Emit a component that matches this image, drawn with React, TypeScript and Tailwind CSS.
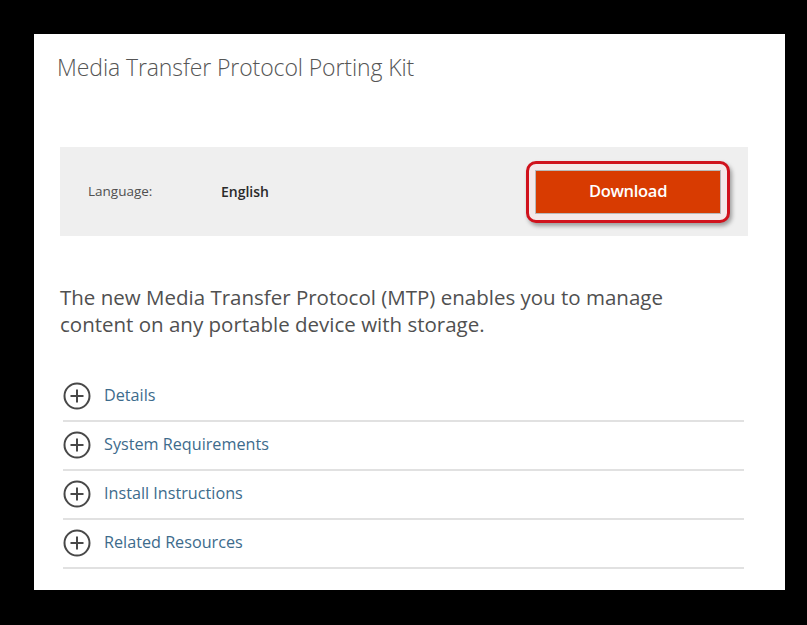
import React from "react";

const sections = ["Details", "System Requirements", "Install Instructions", "Related Resources"];

function PlusCircle() {
  return (
    <svg width="28" height="28" viewBox="0 0 28 28" className="shrink-0">
      <circle cx="14" cy="14" r="12.5" fill="none" stroke="#484848" strokeWidth="2" />
      <path d="M14 7.5v13M7.5 14h13" stroke="#484848" strokeWidth="2" />
    </svg>
  );
}

export default function App() {
  return (
    <div className="h-[625px] w-[807px] overflow-hidden bg-black pl-[34px] pt-[34px]" style={{ fontFamily: '"Open Sans", "Noto Sans", sans-serif' }}>
      <div className="flex h-[556px] w-[751px] flex-col bg-white">
        <h1 className="pl-[23px] pt-[18px] text-[23px] font-light leading-[30px] tracking-[-0.1px] text-[#555]">
          Media Transfer Protocol Porting Kit
        </h1>

        <div className="ml-[26px] mt-[65px] flex h-[89px] w-[688px] items-center bg-[#efefef]">
          <span className="ml-[28px] w-[133px] text-[13.5px] text-[#505050]">Language:</span>
          <span className="text-[14px] font-semibold text-[#2a2a2a]">English</span>
          <div className="ml-auto mr-[18px] rounded-[10px] border-[3px] border-[#d0121c] bg-[#f4e9e9] p-[6px] shadow-[2px_3px_4px_rgba(0,0,0,0.35)]">
            <button className="flex h-[44px] w-[186px] items-center justify-center border border-[#b9b9b9] bg-[#d83b01] text-[16.5px] font-semibold tracking-[-0.3px] text-white">
              Download
            </button>
          </div>
        </div>

        <p className="ml-[26px] mt-[48px] w-[645px] text-[20.5px] leading-[27px] text-[#505050]">
          The new Media Transfer Protocol (MTP) enables you to manage content on any portable device with storage.
        </p>

        <div className="ml-[29px] mt-[35px] w-[681px]">
          {sections.map((s) => (
            <div key={s} className="flex h-[49px] items-center gap-[13px] border-b-2 border-[#e1e1e1] pb-[2px]">
              <PlusCircle />
              <span className="text-[16.2px] text-[#3d6b8c]">{s}</span>
            </div>
          ))}
        </div>
      </div>
    </div>
  );
}
